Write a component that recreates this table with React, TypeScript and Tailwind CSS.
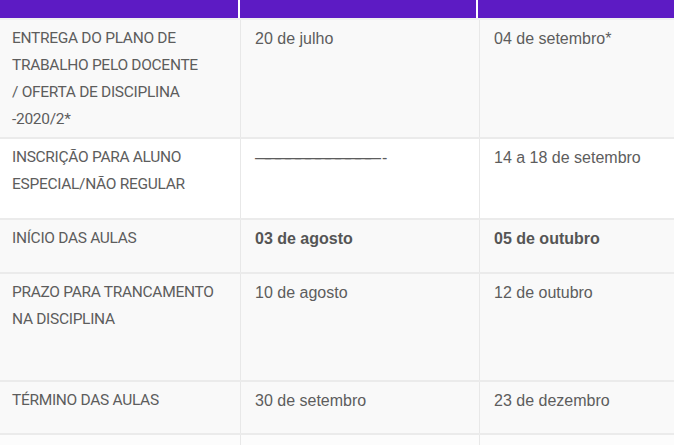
import React from 'react';

type Row = {
  label: string[];
  a: string;
  b: string;
  bold?: boolean;
  dash?: boolean;
  h: string;
  bg: string;
};

const rows: Row[] = [
  {
    label: ['ENTREGA DO PLANO DE', 'TRABALHO PELO DOCENTE', '/ OFERTA DE DISCIPLINA', '-2020/2*'],
    a: '20 de julho',
    b: '04 de setembro*',
    h: 'h-[117px]',
    bg: 'bg-[#f9f9f9]',
  },
  {
    label: ['INSCRIÇÃO PARA ALUNO', 'ESPECIAL/NÃO REGULAR'],
    a: '————————————',
    b: '14 a 18 de setembro',
    dash: true,
    h: 'h-[79px]',
    bg: 'bg-white',
  },
  {
    label: ['INÍCIO DAS AULAS'],
    a: '03 de agosto',
    b: '05 de outubro',
    bold: true,
    h: 'h-[52px]',
    bg: 'bg-[#f9f9f9]',
  },
  {
    label: ['PRAZO PARA TRANCAMENTO', 'NA DISCIPLINA'],
    a: '10 de agosto',
    b: '12 de outubro',
    h: 'h-[106px]',
    bg: 'bg-[#f9f9f9]',
  },
  {
    label: ['TÉRMINO DAS AULAS'],
    a: '30 de setembro',
    b: '23 de dezembro',
    h: 'h-[51px]',
    bg: 'bg-[#f9f9f9]',
  },
  {
    label: [''],
    a: '',
    b: '',
    h: 'h-[40px]',
    bg: 'bg-[#fcfcfc]',
  },
];

export default function App() {
  return (
    <div className="w-[678px] h-[445px] overflow-hidden bg-white font-['Liberation_Sans',Arial,sans-serif] text-[16px] leading-[27px] text-[#5d5d5d]">
      <div className="w-[674px]">
        {/* cabeçalho roxo */}
        <div className="flex h-[18px] bg-[#5d1bc4] border-b-2 border-[#f0f0f0] box-content">
          <div className="w-[240px] border-r-2 border-white" />
          <div className="w-[238px] border-r-2 border-white" />
          <div className="flex-1" />
        </div>

        {rows.map((r, i) => (
          <div key={i} className={`flex box-content border-b-2 border-[#ebebeb] ${r.h} ${r.bg}`}>
            <div className="w-[241px] border-r border-[#e8e8e8] pl-[12px] pt-[5px] font-['Roboto',sans-serif] text-[15.5px] tracking-[-0.3px] whitespace-nowrap">
              {r.label.map((l, j) => (
                <div key={j}>{l}</div>
              ))}
            </div>
            <div
              className={`w-[239px] border-r border-[#e8e8e8] pl-[14px] pt-[5px] whitespace-nowrap ${
                r.bold ? 'font-bold text-[#555]' : ''
              }`}
            >
              {r.dash ? (
                <>
                  <span className="tracking-[-6px]">{r.a}</span>
                  <span className="pl-[7px]">-</span>
                </>
              ) : (
                r.a
              )}
            </div>
            <div className={`flex-1 pl-[14px] pt-[5px] whitespace-nowrap ${r.bold ? 'font-bold text-[#555]' : ''}`}>{r.b}</div>
          </div>
        ))}
      </div>
    </div>
  );
}
